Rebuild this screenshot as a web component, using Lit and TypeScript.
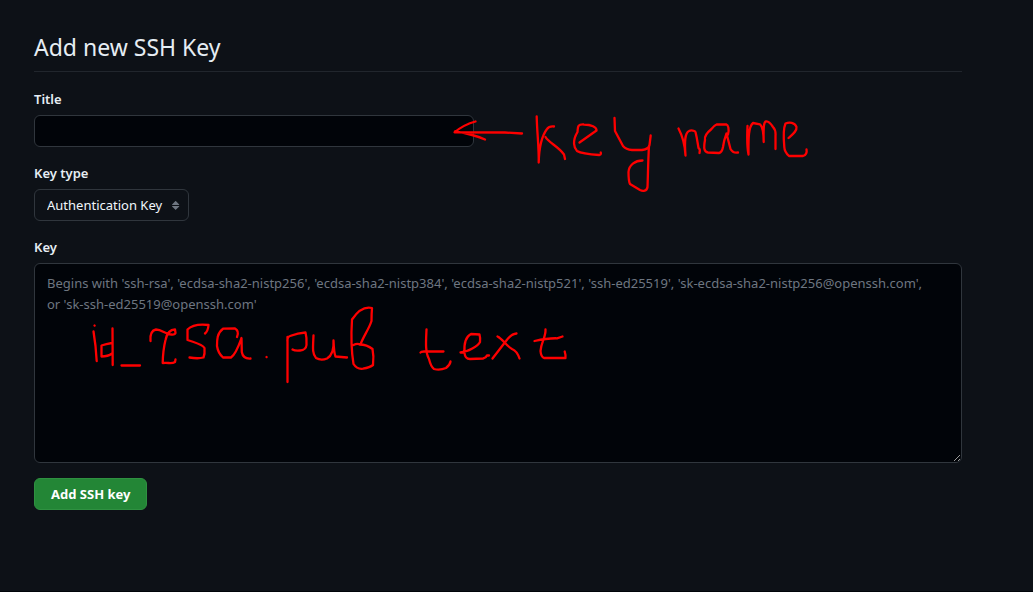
import { LitElement, html, css } from "lit";
import { customElement, state } from "lit/decorators.js";

@customElement("ink-notes")
export class InkNotes extends LitElement {
  static styles = css`
    :host {
      position: absolute;
      top: 0;
      left: 0;
      pointer-events: none;
    }
    .ink {
      display: block;
      fill: none;
      stroke: #fe0000;
      stroke-width: 2.3;
      stroke-linecap: round;
      stroke-linejoin: round;
    }
  `;

  render() {
    return html`
      <svg class="ink" width="820" height="400" viewBox="0 0 820 400" role="img" aria-label="key name; id_rsa.pub text">
        <!-- arrow -->
        <path d="M522 133.5 L505 132.5 L454.500 132.300 C461 127 468 123.500 475.500 121.500 M455 131.500 C466 133 476 135.500 485 139.500" />
        <!-- key -->
        <path d="M536.700 116.500 C537 132 539 147 538.700 162.500 C539 150 541 137 547 129 Q549 126 554 126.500 M545.500 137 C549 143 558 146 564 154.500 L565 159" />
        <path d="M579.500 142.500 L596.500 130.500 C597 127 591 124.500 584 124.500 C577 124 578 127 577.500 132 C572 141 574 148 577 151 C582 154 591 154.500 599.500 155 Q601.500 154.500 600.700 152.500" />
        <path d="M614.500 118 L615 131 L623 146 Q626 149.500 632 150 L642 150 Q649 149 649.500 145 L650.700 135.500 M649 146 C648 162 648 176 647.500 187 C647 191 643 191.500 640 190 L630 184 Q628.500 181 628.500 172 C629 165 635 160.500 642.500 160.500" />
        <!-- name -->
        <path d="M678.500 128.500 C683 137 685 145 685.500 155.500 C684.500 143 684.500 133 689 131 C691 130 695 130.500 695.500 132 C697 138 697.500 142 698.500 148 Q700.500 149 699.500 153" />
        <path d="M728 134.500 C729.500 129 728 125 726.500 124.500 L717 124.300 Q714 125.500 711 129.500 Q704 135 705 140 C703.500 148 704 152 708 152.500 L719 153 Q722 152.500 723 147 Q724 140 726.500 133.500 L730.500 149 Q733 153.500 738 152.500" />
        <path d="M747.500 126 C747 137 747 147 748.500 154.500 C748.500 141 748 127 753 123 L760 124.300 Q763.500 127 763.700 142 C763.500 132 763 122 766 121.500 Q769 121 773 127 Q776 130 775.500 136 L775.500 149" />
        <path d="M788.500 138 C793 134 797 131 796.500 127 C795 122 789 122 785.500 123.500 C783 129 783.500 138 784.300 147 Q784.500 152 789 156 L803 156 Q807.500 154.500 806.500 149.500" />
        <!-- id_ -->
        <path d="M94.500 325.500 L94.600 325.600 M93.500 331.500 L95.500 346 L96.700 361" />
        <path d="M112.500 328.500 L112.700 365 M112 343 Q106 344 101.500 345.500 L101.500 356.500 Q108 356.500 112 353.500 M121.500 365.500 L140 365.500" />
        <!-- rsa -->
        <path d="M150.500 341 C150 335 151 330.500 156 329.500 C162 329.500 165 334 171 334.500 Q175 335 175.500 333 L175 329.500 C170 329.500 167 333 165.500 340 Q163 350 162.700 363 C169 362.500 172 364 175 362 L175.500 359.500" />
        <path d="M205 333.500 Q208 331 208.500 325 C200 324 192 325 187.500 329.500 L187.500 340 C196 343 202 344 204.500 348 Q205 354 203.500 357.500 Q198 359 189.500 357.500" />
        <path d="M237 337 Q239.500 331 235 328.500 L223 328.700 C217 333 217 340 217 346 Q218 353 223 357.500 L231 357.500 C236 354 239 345 241.500 338 L241.800 352 Q243 359 250.500 358.500" />
        <path d="M266.500 357 L266.600 357.100" />
        <!-- pub -->
        <path d="M287.500 342 Q287 337 290 336 Q298 333 305.500 332.500 Q307 338 306.500 345 Q306 350 300 350.500 Q295 351 292.500 349.500 M287.500 337 L287.500 382" />
        <path d="M313.500 335.500 C313 347 312 354 316 358 Q321 361 327 358.500 C333 355 334 348 333.500 340.500 Q334 353 335.500 356.500 L347 357.500" />
        <path d="M353.500 345 Q357 343 360.500 344.500 C363 337 369 329 371.500 321 Q371.500 314 372 308 C366 306.500 359 309 352 319.500 C351 335 351.500 352 353.500 364 Q357 369.500 363 368.700 Q370 367.500 373 365 Q374 356 372.500 349 Q367 344.500 359.500 344.500" />
        <!-- text -->
        <path d="M426.500 329.500 C426 341 425 352 429 359 Q431 367 434 369 Q440 370.500 446 368 Q450 365 450.500 361.500 M420.500 352.500 Q421 351.500 424 351.500 L443.500 351.500" />
        <path d="M460.500 352.500 C468 352 478 346 480 342 Q480.500 338 479.500 334.500 L471 334 C465 337 464 346 464.500 353 Q465 359 470 359 L483 358.500 Q486 358 487 355.500 L489 355.500" />
        <path d="M497.500 336.500 C503 339 505 345 512 349 Q517 351 519.500 358.500 M516.500 333.500 Q511 334 506 341 L492.500 358.500" />
        <path d="M545.500 329.500 C546 337 541 342 540.500 351 Q541 357 544 358 L565.500 358 Q566 356 564.700 351.500 M534.500 341 Q548 338 557 338.300 L562.500 336.500" />
      </svg>
    `;
  }
}

@customElement("app-root")
export class AppRoot extends LitElement {
  static styles = css`
    :host {
      display: block;
      position: relative;
      box-sizing: border-box;
      min-height: 100vh;
      padding: 31px 71px 31px 34px;
      background: #0d1117;
      border-bottom: 1px solid #010409;
      color: #e6edf3;
      font-family: "Segoe UI", "Noto Sans", sans-serif;
      font-size: 13px;
      line-height: 21px;
      color-scheme: dark;
    }
    .heading {
      margin: 0 0 16px;
      padding-bottom: 8px;
      border-bottom: 1px solid #21262d;
      font-size: 23px;
      font-weight: 400;
      line-height: 32px;
    }
    .form {
      display: flex;
      flex-direction: column;
      align-items: flex-start;
      gap: 15px;
    }
    .group {
      display: flex;
      flex-direction: column;
      align-items: flex-start;
      gap: 4px;
      width: 100%;
    }
    .label {
      font-weight: 600;
      line-height: 23px;
    }
    .control {
      box-sizing: border-box;
      margin: 0;
      border: 1px solid #30363d;
      border-radius: 6px;
      background: #010409;
      color: #e6edf3;
      font: inherit;
    }
    .title {
      width: 440px;
      max-width: 100%;
      height: 32px;
      padding: 5px 12px;
    }
    .picker {
      display: inline-grid;
      align-items: center;
    }
    .select {
      grid-area: 1 / 1;
      appearance: none;
      height: 32px;
      padding: 0 25px 0 12px;
      background: #0d1117;
      color: #f0f6fc;
    }
    .arrows {
      grid-area: 1 / 1;
      justify-self: end;
      margin-right: 5px;
      fill: #6e7681;
      pointer-events: none;
    }
    .key {
      width: 100%;
      height: 200px;
      padding: 9px 32px 9px 12px;
      resize: vertical;
    }
    .key::placeholder {
      color: #6e7681;
      opacity: 1;
    }
    .submit {
      height: 32px;
      padding: 0 16px;
      border: 1px solid #2f9141;
      border-radius: 6px;
      background: #238636;
      color: #ffffff;
      font: inherit;
      font-weight: 700;
      cursor: pointer;
    }
  `;

  @state() private keyType = "authentication";

  private onType(e: Event) {
    this.keyType = (e.target as HTMLSelectElement).value;
  }

  render() {
    return html`
      <h2 class="heading">Add new SSH Key</h2>
      <form class="form" @submit=${(e: Event) => e.preventDefault()}>
        <div class="group">
          <label class="label" for="title">Title</label>
          <input class="control title" id="title" type="text" />
        </div>
        <div class="group">
          <label class="label" for="type">Key type</label>
          <div class="picker">
            <select class="control select" id="type" .value=${this.keyType} @change=${this.onType}>
              <option value="authentication">Authentication Key</option>
            </select>
            <svg class="arrows" width="16" height="16" viewBox="0 0 16 16" aria-hidden="true">
              <path d="m4.074 9.427 3.396 3.396a.25.25 0 0 0 .354 0l3.396-3.396A.25.25 0 0 0 11.043 9H4.251a.25.25 0 0 0-.177.427ZM4.074 7.47 7.47 4.073a.25.25 0 0 1 .354 0L11.22 7.47a.25.25 0 0 1-.177.426H4.251a.25.25 0 0 1-.177-.426Z" />
            </svg>
          </div>
        </div>
        <div class="group">
          <label class="label" for="key">Key</label>
          <textarea
            class="control key"
            id="key"
            placeholder="Begins with 'ssh-rsa', 'ecdsa-sha2-nistp256', 'ecdsa-sha2-nistp384', 'ecdsa-sha2-nistp521', 'ssh-ed25519', 'sk-ecdsa-sha2-nistp256@openssh.com', or 'sk-ssh-ed25519@openssh.com'"
          ></textarea>
        </div>
        <button class="submit" type="submit">Add SSH key</button>
      </form>
      <ink-notes></ink-notes>
    `;
  }
}
